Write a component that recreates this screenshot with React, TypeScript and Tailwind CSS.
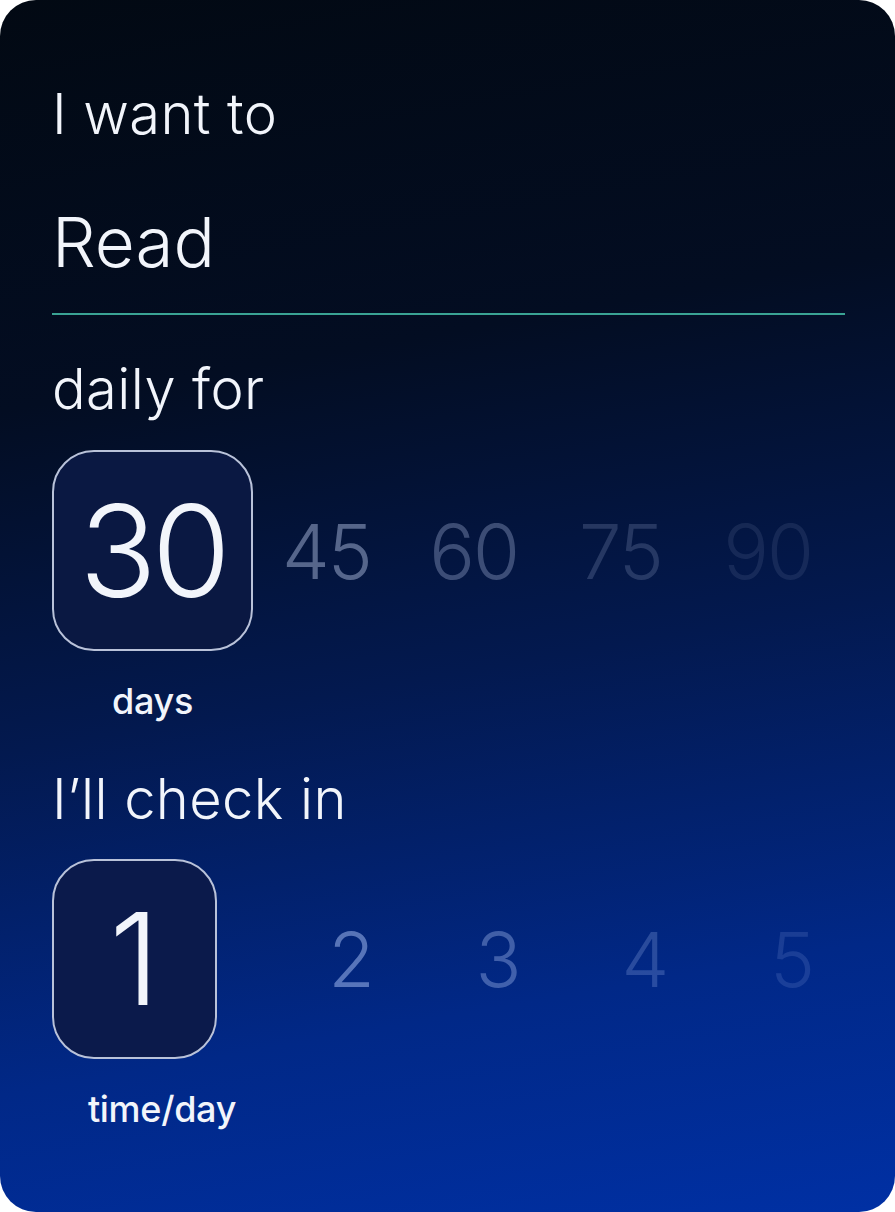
import React from 'react';

const dayOptions = [
    { value: 45, tone: 'text-[#8d9cc0]/60' },
    { value: 60, tone: 'text-[#8d9cc0]/42' },
    { value: 75, tone: 'text-[#8d9cc0]/26' },
    { value: 90, tone: 'text-[#8d9cc0]/14' },
];

const checkOptions = [
    { value: 2, tone: 'text-[#9fb6ec]/55' },
    { value: 3, tone: 'text-[#9fb6ec]/40' },
    { value: 4, tone: 'text-[#9fb6ec]/26' },
    { value: 5, tone: 'text-[#9fb6ec]/16' },
];

const App: React.FC = () => {
    return (
        <div className="min-h-screen bg-white" style={{ fontFamily: 'Inter, "Noto Sans", sans-serif' }}>
            <div className="w-[895px] h-[1212px] rounded-[36px] overflow-hidden bg-[linear-gradient(170deg,#020913_0%,#030d22_30%,#03194f_55%,#012887_80%,#0030a4_100%)] px-[52px] pt-[78px] text-[#f2f5fb]">
                {/* Habit name */}
                <div className="h-[72px] flex items-center text-[56px] font-[350] tracking-[0.4px]">I want to</div>
                <div className="mt-[53px] h-[80px] flex items-center text-[69px] font-[350]">Read</div>
                <div className="mt-[30px] h-[2px] w-[793px] bg-[#3aa394]" />

                {/* Duration */}
                <div className="mt-[38px] h-[72px] flex items-center text-[56px] font-[350] tracking-[0.4px]">daily for</div>
                <div className="mt-[25px] flex items-center">
                    <div className="shrink-0 w-[201px] h-[201px] rounded-[42px] border-2 border-[#b9c2d9] bg-[#0a1842] flex items-center justify-center text-[128px] font-[350] leading-none tracking-[-5px]">
                        30
                    </div>
                    {dayOptions.map(opt => (
                        <div key={opt.value} className={`shrink-0 w-[147px] flex justify-center text-[76px] font-light leading-none tracking-[-2px] ${opt.tone}`}>
                            {opt.value}
                        </div>
                    ))}
                </div>
                <div className="mt-[30px] w-[201px] h-[40px] flex items-center justify-center text-[36px] font-medium tracking-[-0.3px]">days</div>

                {/* Check-ins */}
                <div className="mt-[42px] h-[72px] flex items-center text-[56px] font-[350] tracking-[0.4px]">I’ll check in</div>
                <div className="mt-[24px] flex items-center">
                    <div className="shrink-0 w-[165px] h-[200px] rounded-[42px] border-2 border-[#b9c2d9] bg-[#0b1a4b] flex items-center justify-center text-[128px] font-[350] leading-none">
                        1
                    </div>
                    <div className="flex shrink-0 ml-[61px]">
                        {checkOptions.map(opt => (
                            <div key={opt.value} className={`shrink-0 w-[147px] flex justify-center text-[76px] font-light leading-none ${opt.tone}`}>
                                {opt.value}
                            </div>
                        ))}
                    </div>
                </div>
                <div className="mt-[30px] ml-[25px] w-[170px] h-[40px] flex items-center justify-center text-[36px] font-medium tracking-[-0.3px]">time/day</div>
            </div>
        </div>
    );
};

export default App;
